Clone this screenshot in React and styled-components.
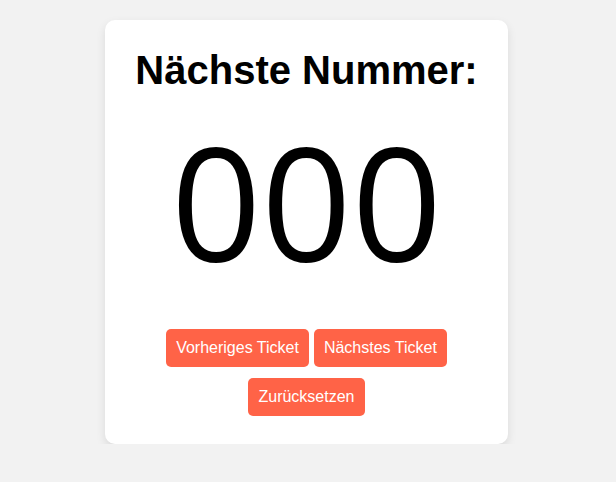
import React from "react";
import styled, { createGlobalStyle } from "styled-components";

const GlobalStyle = createGlobalStyle`
  body {
    margin: 0;
    background-color: #f2f2f2;
    font-family: "Liberation Sans", Arial, sans-serif;
  }
`;

export const Page = styled.div`
  display: flex;
  justify-content: center;
  padding: 20px 3px 0 0;
`;

export const Card = styled.div`
  width: 363px;
  padding: 29px 20px 28px;
  background-color: #fff;
  border-radius: 10px;
  box-shadow: 0 4px 10px rgba(0, 0, 0, 0.1);
  text-align: center;
`;

export const Title = styled.h1`
  margin: 0;
  font-size: 40px;
  line-height: 43px;
  font-weight: bold;
  color: #000;
`;

export const Number = styled.div`
  margin: 0;
  font-family: "Open Sans", sans-serif;
  font-size: 158px;
  line-height: 215px;
  color: #000;
`;

export const Buttons = styled.div`
  display: flex;
  flex-wrap: wrap;
  justify-content: center;
  gap: 10.5px 5px;
  margin-top: 22px;
`;

export const Button = styled.button`
  padding: 10px;
  border: none;
  border-radius: 5px;
  background-color: #ff6347;
  color: #fff;
  font-family: "Liberation Sans", Arial, sans-serif;
  font-size: 16px;
  line-height: 18px;
  cursor: pointer;
`;

export default function App() {
  return (
    <>
      <GlobalStyle />
      <Page>
        <Card>
          <Title>Nächste Nummer:</Title>
          <Number>000</Number>
          <Buttons>
            <Button>Vorheriges Ticket</Button>
            <Button>Nächstes Ticket</Button>
            <Button>Zurücksetzen</Button>
          </Buttons>
        </Card>
      </Page>
    </>
  );
}
